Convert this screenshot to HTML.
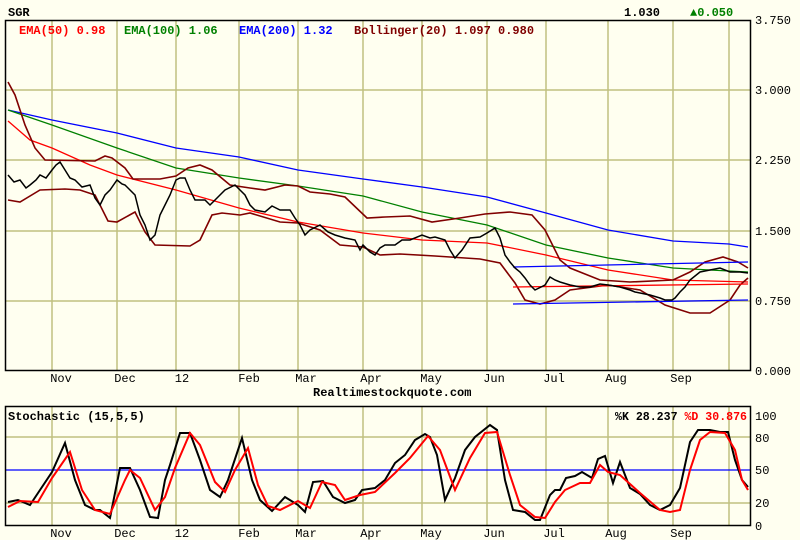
<!DOCTYPE html>
<html><head><meta charset="utf-8"><style>
html,body{margin:0;padding:0;background:#fffff0;}
svg{display:block}
text{font-family:"Liberation Mono",monospace;font-size:12px;}
</style></head><body>
<svg width="800" height="540" viewBox="0 0 800 540" xmlns="http://www.w3.org/2000/svg">
<rect width="800" height="540" fill="#fffff0"/>
<g stroke="#c0c080" stroke-width="1.5">
<line x1="52" y1="20" x2="52" y2="370"/><line x1="117" y1="20" x2="117" y2="370"/><line x1="176" y1="20" x2="176" y2="370"/><line x1="239" y1="20" x2="239" y2="370"/><line x1="298" y1="20" x2="298" y2="370"/><line x1="363" y1="20" x2="363" y2="370"/><line x1="422" y1="20" x2="422" y2="370"/><line x1="487" y1="20" x2="487" y2="370"/><line x1="546" y1="20" x2="546" y2="370"/><line x1="608" y1="20" x2="608" y2="370"/><line x1="673" y1="20" x2="673" y2="370"/><line x1="729" y1="20" x2="729" y2="370"/>
<line x1="5" y1="90" x2="750" y2="90"/><line x1="5" y1="160" x2="750" y2="160"/><line x1="5" y1="231" x2="750" y2="231"/><line x1="5" y1="301" x2="750" y2="301"/>
<line x1="52" y1="406" x2="52" y2="525"/><line x1="117" y1="406" x2="117" y2="525"/><line x1="176" y1="406" x2="176" y2="525"/><line x1="239" y1="406" x2="239" y2="525"/><line x1="298" y1="406" x2="298" y2="525"/><line x1="363" y1="406" x2="363" y2="525"/><line x1="422" y1="406" x2="422" y2="525"/><line x1="487" y1="406" x2="487" y2="525"/><line x1="546" y1="406" x2="546" y2="525"/><line x1="608" y1="406" x2="608" y2="525"/><line x1="673" y1="406" x2="673" y2="525"/><line x1="729" y1="406" x2="729" y2="525"/>
<line x1="5" y1="437" x2="750" y2="437"/><line x1="5" y1="503" x2="750" y2="503"/>
</g>
<g fill="none" stroke-width="1.3">
<polyline stroke="#0000ff" points="8,110 52,120 117,133 176,148 239,157 298,170 363,179 422,187 487,197 546,213 608,230 673,241 729,244 748,247"/>
<polyline stroke="#008000" points="8,110 52,125 117,148 176,168 239,178 298,186 363,196 422,212 487,225 546,245 608,258 673,268 710,270 748,272"/>
<polyline stroke="#ff0000" points="8,121 30,140 52,148 90,165 117,175 176,190 239,208 298,222 363,233 422,240 487,243 546,255 608,270 673,280 748,282"/>
<polyline stroke="#800000" stroke-width="1.6" points="8,82 15,95 25,125 35,148 45,160 95,161 105,156 112,158 125,168 133,179 160,179 176,176 188,168 200,165 212,170 230,185 250,188 265,190 285,185 298,186 310,192 330,194 345,197 367,218 385,217 410,216 432,222 460,218 485,214 510,212 532,215 545,230 560,260 570,268 600,280 630,282 673,280 690,272 705,262 723,257 738,262 748,268"/>
<polyline stroke="#800000" stroke-width="1.6" points="8,200 20,202 40,190 65,189 80,190 95,195 108,221 117,222 135,212 145,232 155,245 190,246 200,240 212,215 222,213 240,215 250,213 280,222 298,223 320,230 340,245 363,247 380,255 400,254 435,256 480,259 500,263 515,283 525,300 540,304 555,300 570,290 608,285 640,290 665,305 690,313 710,313 730,300 740,285 748,278"/>
<polyline stroke="#0000ff" points="513,267 748,262"/>
<polyline stroke="#0000ff" points="513,304 748,300"/>
<polyline stroke="#ff0000" points="513,287 748,284"/>
<polyline stroke="#000000" stroke-width="1.5" points="8,175 14,182 20,180 26,188 30,185 36,180 40,175 46,178 52,170 56,165 60,162 65,170 70,178 75,180 82,187 90,185 95,198 100,205 105,195 110,190 117,180 122,184 125,185 130,190 135,195 140,215 145,225 150,240 155,235 160,215 165,205 170,195 176,180 180,178 185,178 190,190 195,200 205,200 210,205 215,200 225,190 235,185 240,190 245,195 250,205 255,210 265,212 272,206 280,210 290,210 295,218 300,225 305,235 310,230 320,225 328,232 335,235 345,238 355,240 360,250 363,245 370,252 375,255 380,248 385,245 395,245 402,240 410,240 422,235 430,238 435,237 445,240 450,250 455,258 462,250 470,238 480,237 487,233 495,228 500,238 505,255 510,262 515,268 520,272 525,278 530,285 535,290 545,285 550,277 555,280 560,282 570,285 580,287 590,287 600,284 608,285 620,287 630,290 635,292 645,294 650,295 660,298 665,300 672,300 675,298 680,292 685,287 690,280 700,272 710,270 720,268 730,272 740,272 748,273"/>
</g>
<line x1="5" y1="470" x2="750" y2="470" stroke="#0000ff" stroke-width="1.3"/>
<g fill="none" stroke-width="2">
<polyline stroke="#000" points="8,502 18,500 30,505 40,490 52,472 65,443 75,480 85,505 95,510 100,510 110,518 120,468 130,468 140,490 150,517 158,518 165,480 170,465 180,433 190,433 200,460 210,490 220,497 228,480 242,438 252,480 260,500 272,511 285,497 298,505 305,512 313,482 323,481 333,497 345,503 355,500 362,490 375,488 385,480 395,463 405,455 415,440 425,434 430,437 437,455 445,500 455,478 465,450 475,437 490,425 497,430 505,480 513,510 525,512 535,520 540,520 550,495 555,490 560,490 566,478 575,476 582,472 592,478 598,459 605,456 613,483 620,462 630,488 640,494 650,505 660,510 670,505 680,488 690,442 698,430 710,430 720,432 728,432 735,460 742,480 748,487"/>
<polyline stroke="#ff0000" points="8,507 20,501 38,502 52,478 70,452 82,490 95,510 110,514 125,480 130,470 140,478 155,510 165,497 175,468 190,433 200,445 215,482 225,492 235,470 248,448 258,485 268,506 280,510 298,501 310,508 322,482 335,485 345,500 360,495 375,492 395,473 410,458 428,436 440,450 455,490 470,458 485,433 497,432 510,475 520,505 535,517 545,518 555,502 565,490 580,483 590,483 600,465 608,472 620,475 640,493 660,510 670,512 680,510 690,470 700,440 710,432 725,433 735,450 742,480 748,490"/>
</g>
<rect x="5.5" y="20.5" width="745" height="350" fill="none" stroke="#000" stroke-width="1.5"/>
<rect x="5.5" y="406.5" width="745" height="119" fill="none" stroke="#000" stroke-width="1.5"/>
<g font-weight="bold">
<text x="8" y="16" fill="#000">SGR</text>
<text x="624" y="16" fill="#000">1.030</text>
<text x="690" y="16" fill="#008000">▲0.050</text>
<text x="19" y="34" fill="#ff0000">EMA(50) 0.98</text>
<text x="124" y="34" fill="#008000">EMA(100) 1.06</text>
<text x="239" y="34" fill="#0000ff">EMA(200) 1.32</text>
<text x="354" y="34" fill="#800000">Bollinger(20) 1.097 0.980</text>
<text x="313" y="396" fill="#000">Realtimestockquote.com</text>
<text x="8" y="420" fill="#000">Stochastic (15,5,5)</text>
<text x="615" y="420" fill="#000" textLength="132" lengthAdjust="spacingAndGlyphs">%K 28.237 <tspan fill="#ff0000">%D 30.876</tspan></text>
</g>
<g fill="#000">
<text x="755" y="24">3.750</text><text x="755" y="94">3.000</text><text x="755" y="164">2.250</text><text x="755" y="235">1.500</text><text x="755" y="305">0.750</text><text x="755" y="375">0.000</text>
<text x="755" y="420">100</text><text x="755" y="442">80</text><text x="755" y="474">50</text><text x="755" y="507">20</text><text x="755" y="530">0</text>
</g>
<g fill="#000" text-anchor="middle">
<text x="61" y="382">Nov</text><text x="125" y="382">Dec</text><text x="182" y="382">12</text><text x="249" y="382">Feb</text><text x="306" y="382">Mar</text><text x="371" y="382">Apr</text><text x="431" y="382">May</text><text x="494" y="382">Jun</text><text x="554" y="382">Jul</text><text x="616" y="382">Aug</text><text x="681" y="382">Sep</text>
<text x="61" y="537">Nov</text><text x="125" y="537">Dec</text><text x="182" y="537">12</text><text x="249" y="537">Feb</text><text x="306" y="537">Mar</text><text x="371" y="537">Apr</text><text x="431" y="537">May</text><text x="494" y="537">Jun</text><text x="554" y="537">Jul</text><text x="616" y="537">Aug</text><text x="681" y="537">Sep</text>
</g>
</svg>
</body></html>
